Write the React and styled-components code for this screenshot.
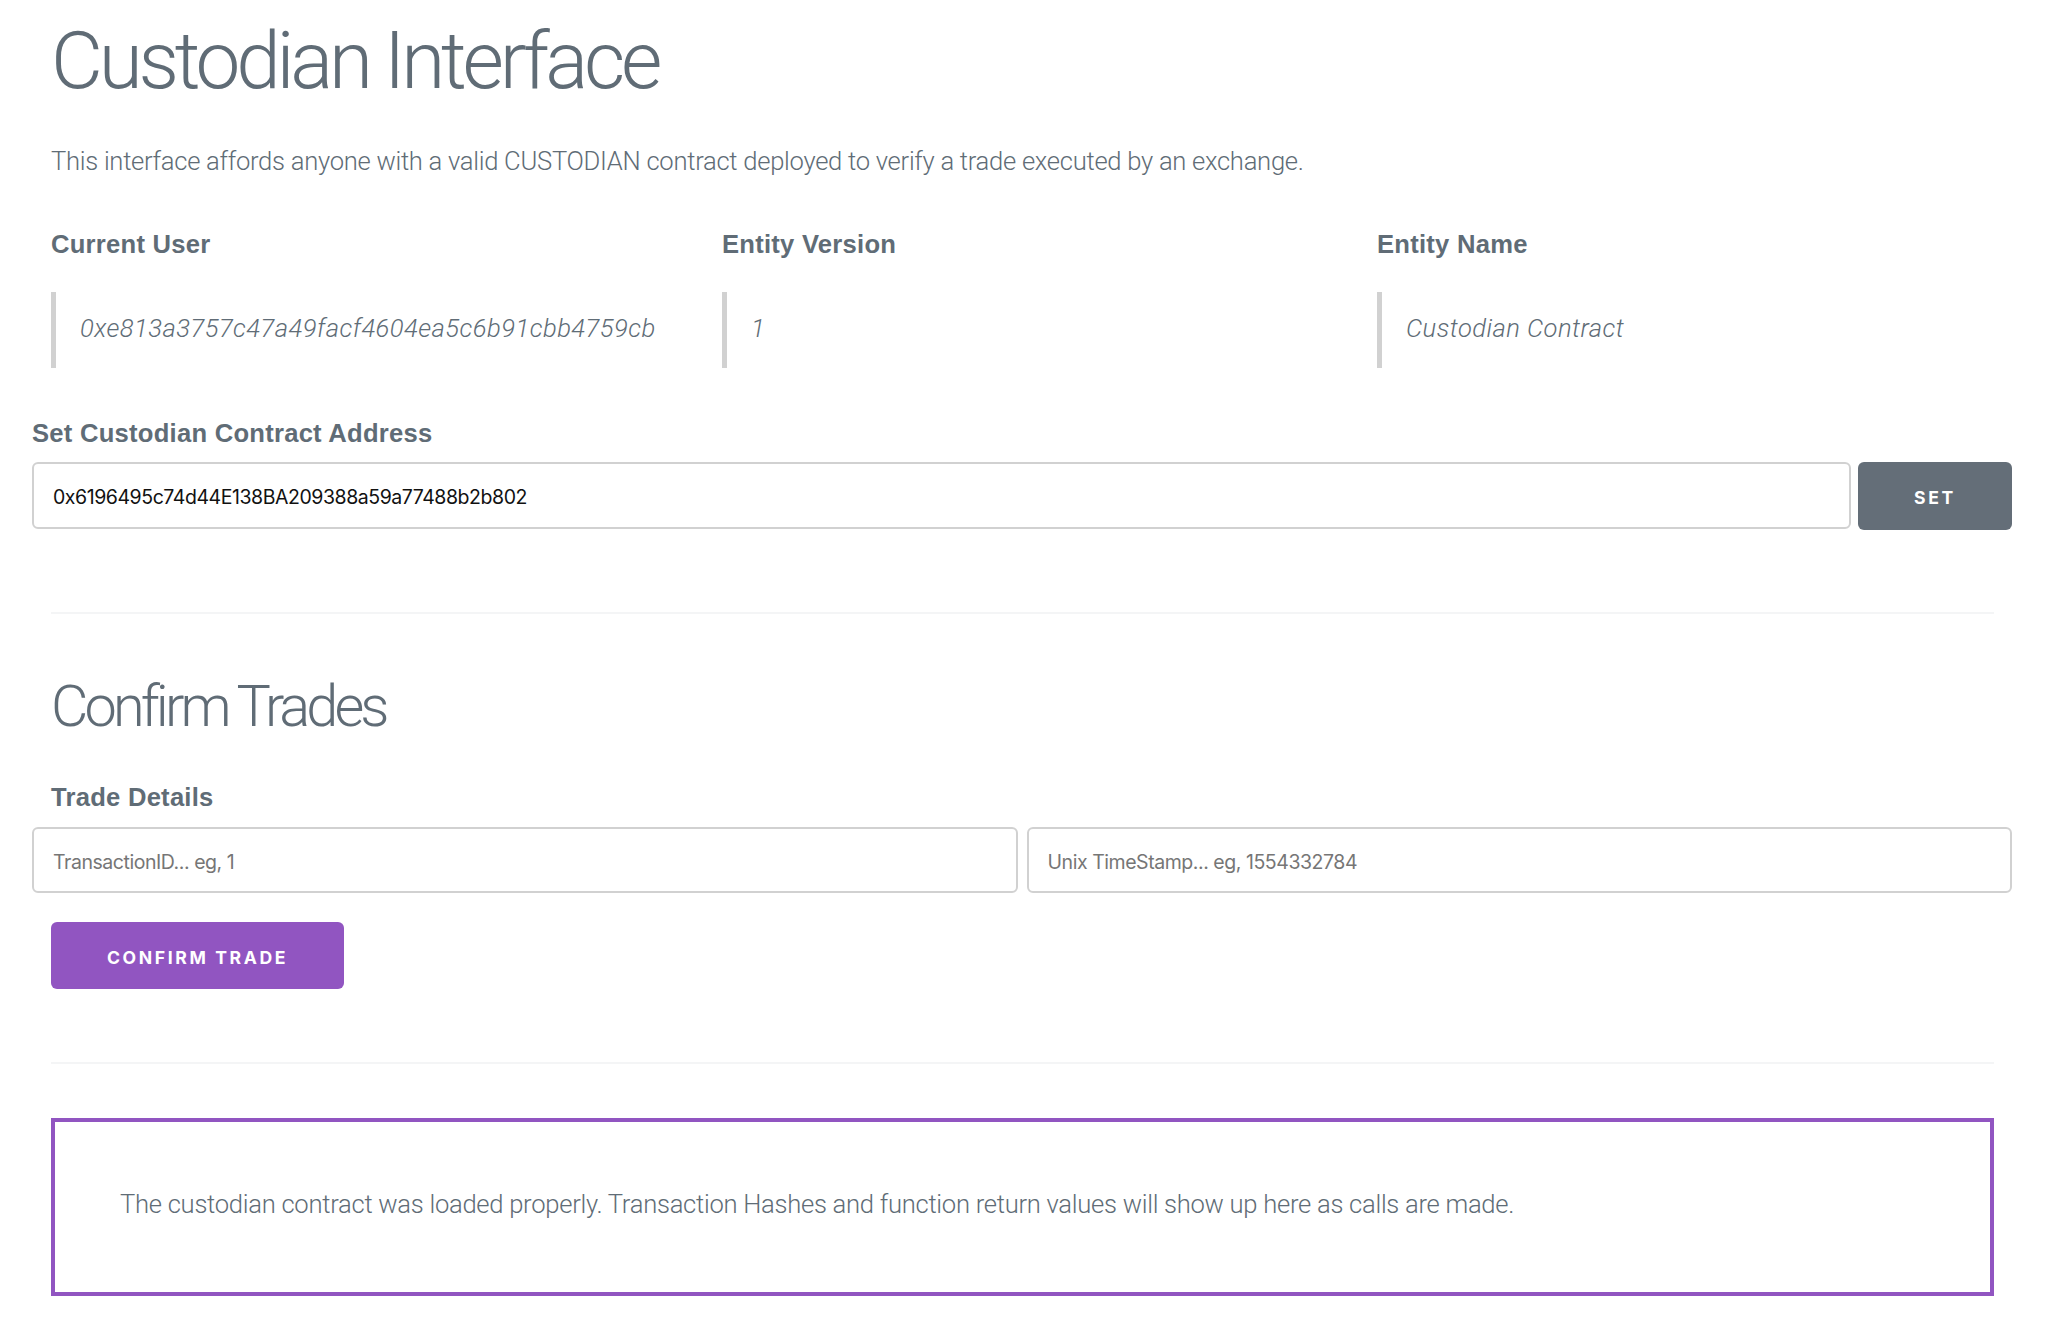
import React from 'react';
import styled, { createGlobalStyle } from 'styled-components';

const GlobalStyle = createGlobalStyle`
  html, body {
    margin: 0;
    padding: 0;
    background: #fff;
  }
  body {
    color: #606c76;
    font-family: Roboto, "Liberation Sans", sans-serif;
    font-weight: 300;
    font-size: 25.6px;
    line-height: 41px;
    letter-spacing: -0.28px;
  }
  * {
    box-sizing: border-box;
  }
`;

const Page = styled.div`
  padding: 13px 50px 20px 32px;
`;

const Section = styled.div`
  padding: 0 18px 0 19px;
`;

const Title = styled.h1`
  margin: 0 0 32px;
  font-size: 80px;
  line-height: 96px;
  font-weight: 300;
  letter-spacing: -4.2px;
`;

const SubTitle = styled.h3`
  margin: 0 0 36px;
  font-size: 57.6px;
  line-height: 69px;
  font-weight: 300;
  letter-spacing: -3.9px;
`;

const Intro = styled.p`
  margin: 0 0 42px;
`;

const Label = styled.label`
  display: block;
  margin: 0 0 ${(p) => p.$gap || 8}px;
  font-family: "Liberation Sans", Arial, sans-serif;
  font-weight: 700;
  font-size: 25.6px;
  line-height: 41px;
  letter-spacing: 0.25px;
`;

const InfoRow = styled.div`
  display: grid;
  grid-template-columns: 671px 655px 1fr;
  margin-bottom: 45px;
`;

const Column = styled.div`
  min-width: 0;
`;

const Quote = styled.blockquote`
  margin: 0;
  padding: 16px 24px 19px;
  border-left: 5px solid #d1d1d1;
  font-style: italic;
  letter-spacing: 0.45px;
  white-space: nowrap;
`;

const AddressRow = styled.div`
  display: flex;
  gap: 7px;
  align-items: flex-start;
`;

const Input = styled.input`
  display: block;
  width: 100%;
  flex: 1;
  height: ${(p) => p.$height || 67}px;
  padding: 3px 19px 0;
  border: 2px solid #d1d1d1;
  border-radius: 6px;
  background: #fff;
  color: #111;
  font-family: Inter, "Noto Sans", sans-serif;
  font-weight: 400;
  font-size: 19.5px;
  letter-spacing: -0.45px;
  outline: none;

  &::placeholder {
    color: #767676;
  }
`;

const Button = styled.button`
  display: flex;
  align-items: center;
  justify-content: center;
  flex: none;
  height: ${(p) => p.$height || 67}px;
  width: ${(p) => p.$width}px;
  padding: 3px 0 0;
  margin-top: ${(p) => p.$top || 0}px;
  border: none;
  border-radius: 6px;
  background: ${(p) => p.$bg};
  color: #fff;
  font-family: Inter, "Liberation Sans", sans-serif;
  font-weight: 700;
  font-size: 17.6px;
  letter-spacing: 2.6px;
  text-transform: uppercase;
  cursor: pointer;
`;

const Rule = styled.hr`
  margin: ${(p) => p.$top}px 0 0;
  border: none;
  border-top: 2px solid #f4f5f6;
`;

const TradeRow = styled.div`
  display: grid;
  grid-template-columns: 1fr 1fr;
  gap: 9px;
`;

const Spacer = styled.div`
  height: ${(p) => p.$h}px;
`;

const Output = styled.div`
  margin-top: 54px;
  padding: 62px 65px 67px;
  border: 4px solid #9155c1;
  white-space: nowrap;
`;

const info = [
  { label: 'Current User', value: '0xe813a3757c47a49facf4604ea5c6b91cbb4759cb' },
  { label: 'Entity Version', value: '1' },
  { label: 'Entity Name', value: 'Custodian Contract' },
];

const App = () => (
  <Page>
    <GlobalStyle />
    <Section>
      <Title>Custodian Interface</Title>
      <Intro>
        This interface affords anyone with a valid CUSTODIAN contract deployed to verify a trade executed by an exchange.
      </Intro>
      <InfoRow>
        {info.map((item) => (
          <Column key={item.label}>
            <Label $gap={27}>{item.label}</Label>
            <Quote>{item.value}</Quote>
          </Column>
        ))}
      </InfoRow>
    </Section>

    <Label>Set Custodian Contract Address</Label>
    <AddressRow>
      <Input defaultValue="0x6196495c74d44E138BA209388a59a77488b2b802" />
      <Button $bg="#646e78" $width={154} $height={68}>Set</Button>
    </AddressRow>

    <Section>
      <Rule $top={82} />
      <Spacer $h={58} />
      <SubTitle>Confirm Trades</SubTitle>
      <Label $gap={9}>Trade Details</Label>
    </Section>

    <TradeRow>
      <Input $height={66} placeholder="TransactionID... eg, 1" />
      <Input $height={66} placeholder="Unix TimeStamp... eg, 1554332784" />
    </TradeRow>

    <Section>
      <Button $bg="#9155c1" $width={293} $top={29}>Confirm Trade</Button>
      <Rule $top={73} />
      <Output>
        The custodian contract was loaded properly. Transaction Hashes and function return values will show up here as calls are made.
      </Output>
    </Section>
  </Page>
);

export default App;
